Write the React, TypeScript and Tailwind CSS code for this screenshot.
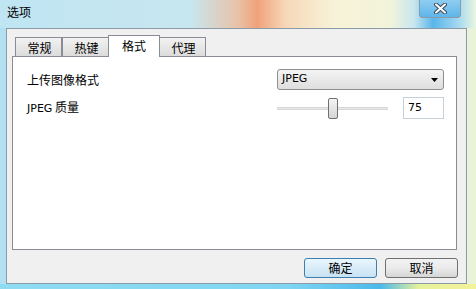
import React from "react"

const cjk = "font-['Microsoft_YaHei','Noto_Sans_CJK_SC',sans-serif]"
const latin = "font-['Tahoma','DejaVu_Sans','Noto_Sans_CJK_SC',sans-serif]"

function Tab({ label, active }: { label: string; active?: boolean }) {
  if (active) {
    return (
      <div className="relative z-10 -mx-[1px] mb-[-1px] flex h-[22px] w-[52px] items-start justify-center border border-b-0 border-[#898c95] bg-white pt-[1px] text-[12px] text-black">
        {label}
      </div>
    )
  }
  return (
    <div className="flex h-[19px] w-[47px] items-start justify-center border border-b-0 border-[#898c95] bg-gradient-to-b from-[#f2f2f2] to-[#dcdcdc] pl-[2px] pt-[1px] text-[12px] leading-[17px] text-black">
      {label}
    </div>
  )
}

function Button({ label, focused }: { label: string; focused?: boolean }) {
  return (
    <div
      className={`flex h-[20px] w-[73px] items-center justify-center rounded-[3px] border text-[12px] text-black ${
        focused
          ? "border-[#3c7fb1] bg-gradient-to-b from-[#eaf6fd] to-[#c8e2f3]"
          : "border-[#707070] bg-gradient-to-b from-[#f2f2f2] via-[#ebebeb] to-[#d6d6d6]"
      }`}
    >
      {label}
    </div>
  )
}

export default function App() {
  return (
    <div
      className={`relative flex h-[289px] w-[476px] flex-col overflow-hidden bg-gradient-to-r from-[#b3e0f1] via-[#c9e6ee] to-[#e9f3d8] ${cjk}`}
    >
      {/* title bar */}
      <div className="relative flex h-[28px] items-start bg-[linear-gradient(90deg,#bfe5f3_0%,#c7e6ef_40%,#e9c2a8_50%,#f0a27a_54%,#f6d8b8_60%,#f7f2d8_70%,#f2f4da_82%,#c8e6ef_87%,#59b6ea_91%,#9fd6f2_96%,#e9f6e0_100%)] pl-[7px] pt-[4px]">
        <span className="text-[12px] leading-[16px] text-black">选项</span>
        <div className="absolute right-[15px] top-0 flex h-[18px] w-[42px] items-center justify-center rounded-b-[4px] border border-t-0 border-[#8a9aa6] bg-gradient-to-b from-[#8fcdf0] to-[#5db5ea]">
          <svg width="13" height="11" viewBox="0 0 13 11">
            <path d="M2 1.5 L11 9.5 M11 1.5 L2 9.5" stroke="#3a4a5a" strokeWidth="4" strokeLinecap="round" />
            <path d="M2 1.5 L11 9.5 M11 1.5 L2 9.5" stroke="#ffffff" strokeWidth="2" strokeLinecap="round" />
          </svg>
        </div>
      </div>

      {/* client area */}
      <div className="ml-[6px] flex h-[256px] w-[461px] flex-col border border-[#8a9aa6] bg-[#f0f0f0]">
        <div className="ml-[8px] mt-[5px] flex h-[22px] items-end">
          <Tab label="常规" />
          <Tab label="热键" />
          <Tab label="格式" active />
          <Tab label="代理" />
        </div>

        <div className="ml-[5px] flex h-[194px] w-[445px] flex-col border border-[#898c95] bg-white pl-[14px] pr-[12px] pt-[12px]">
          <div className="flex h-[21px] items-center">
            <span className="flex-1 text-[12px] text-black">上传图像格式</span>
            <div className="flex h-[21px] w-[167px] items-center justify-between rounded-[3px] border border-[#8e8f8f] bg-gradient-to-b from-[#f4f4f4] to-[#dedede] pl-[4px] pr-[5px]">
              <span className={`${latin} text-[11px] text-black`}>JPEG</span>
              <svg width="7" height="4" viewBox="0 0 7 4">
                <path d="M0 0 L7 0 L3.5 4 Z" fill="#000" />
              </svg>
            </div>
          </div>

          <div className="mt-[7px] flex h-[22px] items-center">
            <span className="flex-1 text-[12px] text-black">
              <span className={`${latin} text-[11px]`}>JPEG</span> 质量
            </span>
            <div className="relative flex h-[22px] w-[111px] items-center">
              <div className="h-[3px] w-full border-y border-[#d6d6d6] bg-[#e7eaea]" />
              <div className="absolute left-[51px] top-[1px] h-[21px] w-[10px] rounded-[2px] border border-[#707070] bg-gradient-to-b from-[#f4f4f4] to-[#d5d5d5]" />
            </div>
            <div className="ml-[15px] flex h-[22px] w-[41px] items-center border border-[#c8cfd6] bg-white pl-[4px]">
              <span className={`${latin} text-[11px] text-black`}>75</span>
            </div>
          </div>
        </div>

        <div className="mr-[8px] mt-[8px] flex justify-end gap-[8px]">
          <Button label="确定" focused />
          <Button label="取消" />
        </div>
      </div>

      {/* bottom glass frame */}
      <div className="h-[5px] bg-[linear-gradient(90deg,#8fdcf2_0%,#7fd6f2_60%,#4cb9ea_80%,#e6f29a_88%,#f2f29a_100%)]" />
    </div>
  )
}
